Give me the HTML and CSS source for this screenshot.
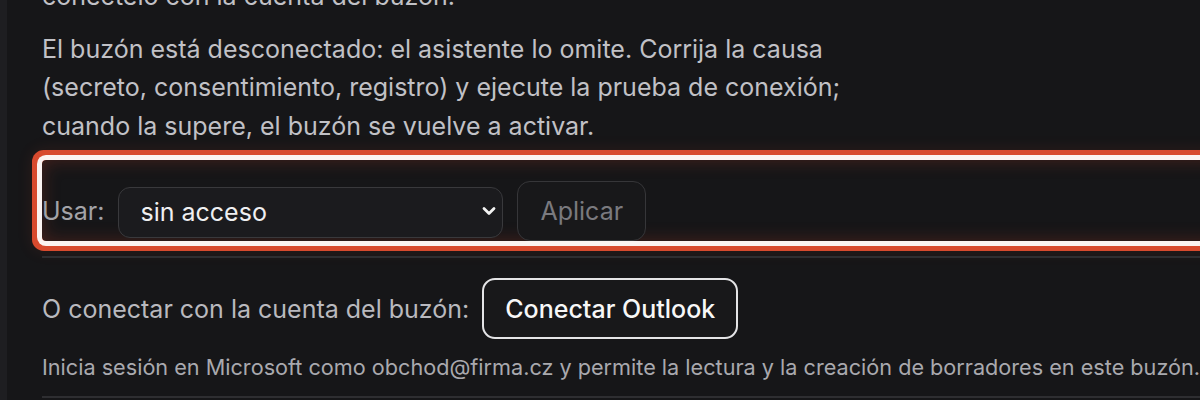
FILE: index.html
```html
<!DOCTYPE html>
<html lang="es">
<head>
    <meta charset="UTF-8">
    <meta name="viewport" content="width=device-width, initial-scale=1.0">
    <title>Buzón</title>
    <link rel="stylesheet" href="styles.css">
</head>
<body>
<div class="rail"></div>
<main class="panel">
    <p class="note note-top">conéctelo con la cuenta del buzón.</p>
    <p class="note">El buzón está desconectado: el asistente lo omite. Corrija la causa<br>
        (secreto, consentimiento, registro) y ejecute la prueba de conexión;<br>
        cuando la supere, el buzón se vuelve a activar.</p>

    <div class="use-row">
        <label class="use-label" for="access">Usar:</label>
        <div class="select-wrap">
            <select id="access" class="select">
                <option>sin acceso</option>
            </select>
            <svg class="chevron" width="14" height="10" viewBox="0 0 14 10">
                <path d="M2 2.5 L7 7.5 L12 2.5" fill="none" stroke="#f2f2f2" stroke-width="2.8" stroke-linecap="round" stroke-linejoin="round"/>
            </svg>
        </div>
        <button class="btn btn-disabled" disabled>Aplicar</button>
    </div>

    <hr class="sep">

    <div class="connect-row">
        <span class="connect-label">O conectar con la cuenta del buzón:</span>
        <button class="btn btn-outline">Conectar Outlook</button>
    </div>
    <p class="hint">Inicia sesión en Microsoft como obchod@firma.cz y permite la lectura y la creación de borradores en este buzón.</p>

    <hr class="sep sep-bottom">
</main>
</body>
</html>
```

FILE: styles.css
```css
/* Base */
html, body {
    margin: 0;
    height: 100%;
    overflow: hidden;
}

body {
    display: flex;
    background-color: #161618;
    font-family: Inter, "Noto Sans", sans-serif;
    color: #c1c1c6;
}

/* Left side rail */
.rail {
    width: 7px;
    flex: none;
    background-color: #1e1e21;
}

/* Main column */
.panel {
    flex: none;
    width: 1190px;
    padding-left: 35px;
    margin-top: -23px;
}

.note {
    margin: 0;
    font-size: 25px;
    line-height: 38.5px;
}

.note-top {
    margin-bottom: 14px;
}

/* Access row with the focus highlight */
.use-row {
    display: flex;
    align-items: center;
    gap: 14px;
    height: 60px;
    padding-top: 21px;
    margin-top: 15px;
    border-radius: 4px;
    box-shadow:
        0 0 0 5px #fbf3f1,
        0 0 0 10px #d84a2e,
        0 0 16px 10px rgba(217, 74, 48, 0.12),
        inset 0 0 18px rgba(190, 60, 35, 0.3);
}

.use-label {
    font-size: 25px;
    color: #a3a3a8;
}

.select-wrap {
    position: relative;
}

.select {
    appearance: none;
    width: 385px;
    height: 51px;
    padding: 0 40px 0 21px;
    background-color: #1b1b1e;
    border: 1px solid #39393c;
    border-radius: 12px;
    font-family: inherit;
    font-size: 25px;
    color: #efeff1;
    margin-top: 2px;
}

.chevron {
    position: absolute;
    right: 7px;
    top: 21px;
}

/* Buttons */
.btn {
    font-family: inherit;
    font-size: 25px;
    background-color: #18181a;
    border-radius: 13px;
    padding: 0 22px;
    height: 60px;
}

.btn-disabled {
    color: #7a7a7f;
    border: 1px solid #363639;
}

.btn-outline {
    color: #f7f7f7;
    font-weight: 500;
    border: 2px solid #e4e4e6;
    height: 61px;
    padding: 0 21px;
}

/* Separators */
.sep {
    border: none;
    height: 2px;
    background-color: #2e2e31;
    margin: 15px 0 0;
}

.sep-bottom {
    margin-top: 14px;
}

/* Outlook connection */
.connect-row {
    display: flex;
    align-items: center;
    gap: 13px;
    margin-top: 20px;
}

.connect-label {
    font-size: 25px;
    color: #b9b9be;
}

.hint {
    margin: 13px 0 0;
    font-size: 21.65px;
    line-height: 30px;
    color: #a9a9ae;
}
```
